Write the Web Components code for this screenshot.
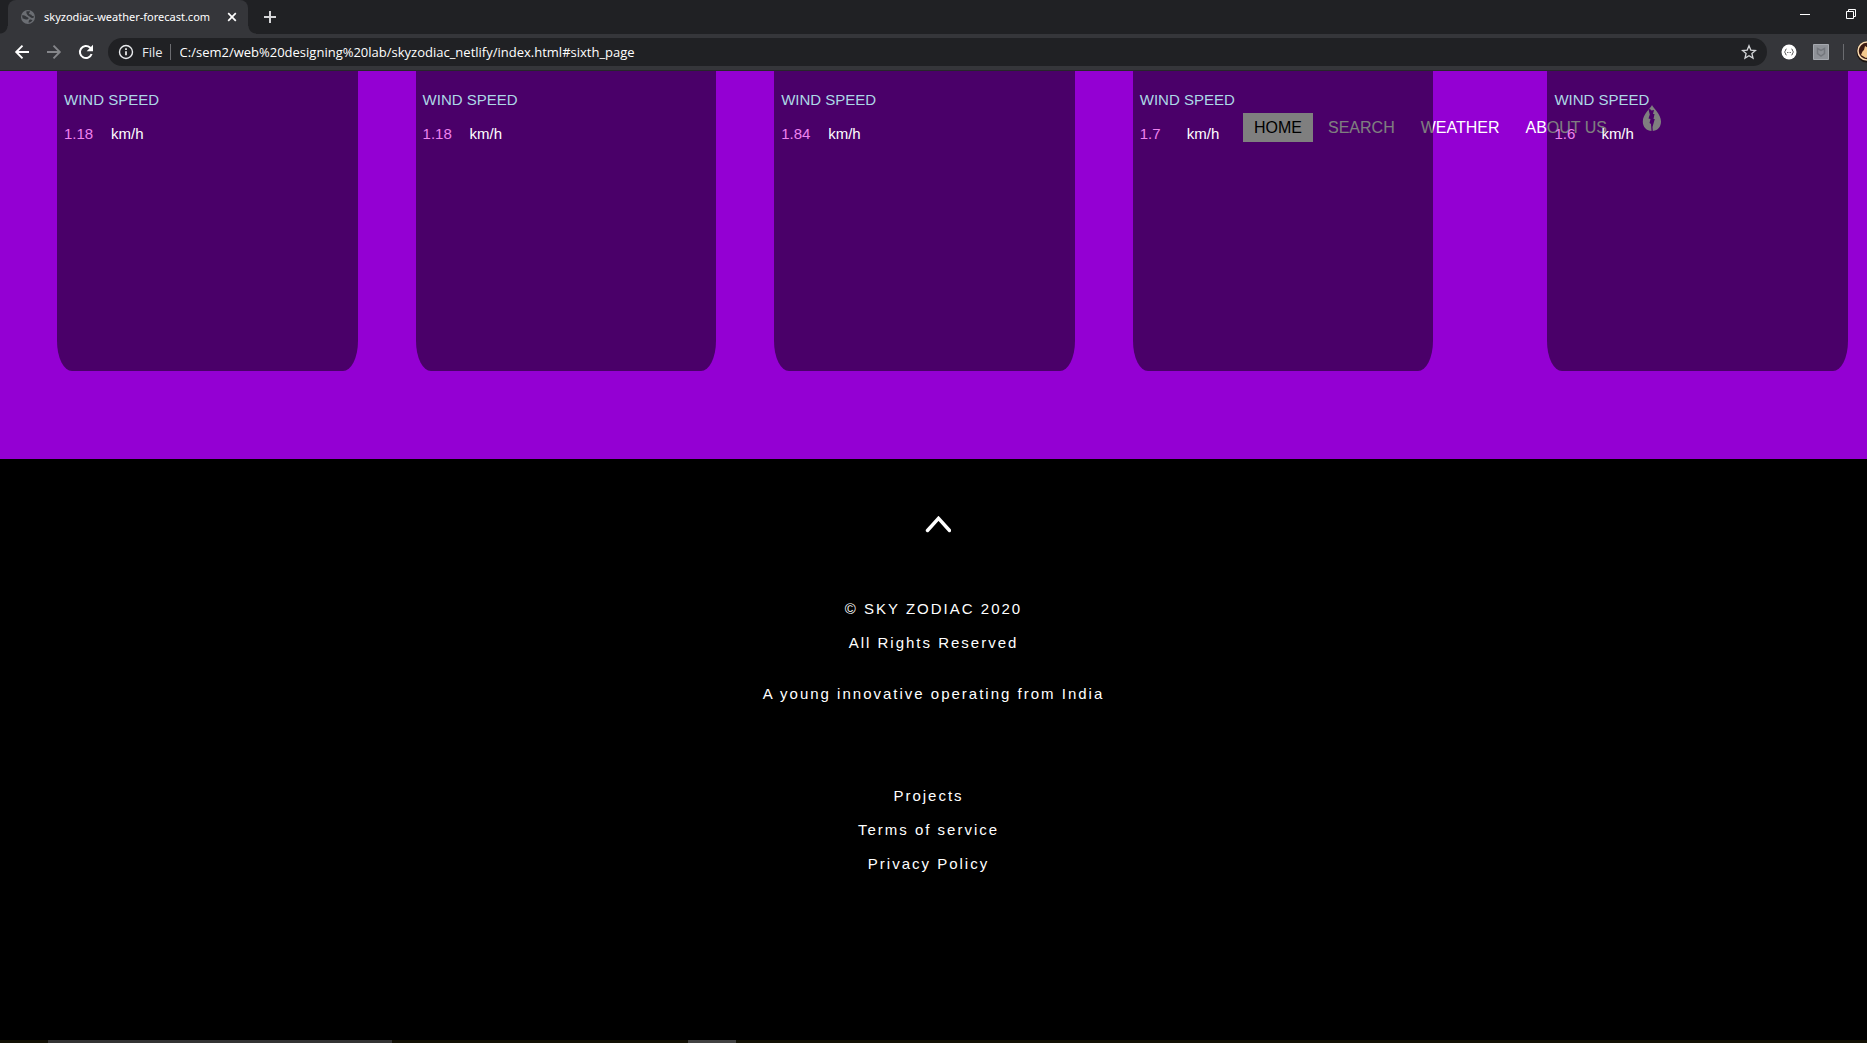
<!DOCTYPE html>
<html lang="en">
<head>
<meta charset="utf-8">
<title>skyzodiac-weather-forecast.com</title>
<style>
body{margin:0;min-height:100vh;display:flex;flex-direction:column;background:#000;font-family:"Liberation Sans",Arial,sans-serif;overflow:hidden}
</style>
</head>
<body>
<browser-bar></browser-bar>
<weather-page>
  <site-nav slot="nav"></site-nav>
  <wind-card speed="1.18"></wind-card>
  <wind-card speed="1.18"></wind-card>
  <wind-card speed="1.84"></wind-card>
  <wind-card speed="1.7"></wind-card>
  <wind-card speed="1.6" class="last"></wind-card>
</weather-page>
<site-footer></site-footer>
<task-strip></task-strip>
<script>
const define = (name, html) => customElements.define(name, class extends HTMLElement {
  constructor() {
    super();
    this.attachShadow({ mode: "open" }).innerHTML = html;
  }
  connectedCallback() {
    const value = this.shadowRoot.querySelector(".value");
    if (value) value.textContent = this.getAttribute("speed");
  }
});

define("browser-bar", `
<style>
:host{display:block;font-family:"Open Sans","Noto Sans",sans-serif;color:#fff}
*{box-sizing:border-box}
svg{display:block;flex:none}
button{display:flex;align-items:center;justify-content:center;border:0;padding:0;background:none;color:inherit}
.tabs{height:34px;background:#202124;display:flex;align-items:stretch;overflow:hidden}
.curve{width:8px;align-self:flex-end;height:8px;background:radial-gradient(circle at 0 0,#202124 7px,#35363a 8px)}
.curve.right{background:radial-gradient(circle at 100% 0,#202124 7px,#35363a 8px)}
.tab{width:240px;background:#35363a;border-radius:8px 8px 0 0;display:flex;align-items:center;padding:0 10px 0 13px}
.title{flex:1;margin-left:9px;font-family:"Noto Sans",sans-serif;font-size:11px;line-height:16px;white-space:nowrap}
.tab button{width:12px;height:12px}
.plus{width:28px}
.win{margin-left:auto;margin-right:-7px;display:flex}
.win button{width:46px}
.tools{height:37px;background:#35363a;border-bottom:1px solid #26272a;display:flex;align-items:center;padding-left:6px}
.tools>button{width:32px;height:32px}
.omni{flex:1;height:28px;margin:0 12px 0 6px;background:#202124;border-radius:14px;display:flex;align-items:center;padding:0 10px;font-size:13px;line-height:18px}
.file{margin-left:8px;color:#e8eaed}
.bar{width:1px;height:16px;background:#6b6c70;margin:0 9px 0 7px}
input{flex:1;min-width:0;border:0;padding:0;background:none;color:#fff;font:inherit;outline:0}
.ext{display:flex;align-items:center;width:88px;overflow:hidden}
.ext svg+svg{margin-left:15px}
.ext .bar{margin:0 12px 0 14px;flex:none}
</style>
<div class="tabs">
  <span class="curve"></span>
  <div class="tab">
    <svg width="14" height="14" viewBox="0 0 14 14"><circle cx="7" cy="7" r="7" fill="#6b6e73"/><path d="M1 5.500C2 5 3.500 5 4.500 6s2 1 2.800 1.800S7 9.500 6 9.500 3 9 1.600 8.500zM5.500 1.300 9 1.200c.3 1.300-1.500 1.500-1 2.600s2.500.5 2.800 1.700 2.200 0 2.300 1.500c-1 1.500-3 1-3.600.2S7.500 6 6.500 5 5.200 2.500 5.500 1.300zM9 9.500c1 0 2 .2 2.500.8C10.500 12 9 12.700 7.600 12.800 7.500 11.500 8 9.500 9 9.500z" fill="#34363a"/></svg>
    <span class="title">skyzodiac-weather-forecast.com</span>
    <button aria-label="Close tab"><svg width="10" height="10" viewBox="0 0 10 10"><path d="m1.200 1.200 7.600 7.600m0-7.600L1.200 8.800" stroke="#fff" stroke-width="1.700"/></svg></button>
  </div>
  <span class="curve right"></span>
  <button class="plus" aria-label="New tab"><svg width="12" height="12" viewBox="0 0 12 12"><path d="M6 0v12M0 6h12" stroke="#d5d6d8" stroke-width="2"/></svg></button>
  <div class="win">
    <button aria-label="Minimize"><svg width="10" height="28" viewBox="0 0 10 28"><path d="M0 11.500h10" stroke="#fff"/></svg></button>
    <button aria-label="Restore"><svg width="10" height="30" viewBox="0 0 10 30"><path d="M.5 9.500h7v7h-7zM2.500 9V7.500h7v7H8" fill="none" stroke="#fff"/></svg></button>
  </div>
</div>
<div class="tools">
  <button aria-label="Back"><svg width="16" height="16" viewBox="0 0 16 16"><path d="M15 8H2m6.500-6.300L2.200 8l6.300 6.300" fill="none" stroke="#fff" stroke-width="1.900"/></svg></button>
  <button aria-label="Forward"><svg width="16" height="16" viewBox="0 0 16 16"><path d="M1 8h13M7.500 1.700 13.800 8l-6.300 6.300" fill="none" stroke="#85868a" stroke-width="1.900"/></svg></button>
  <button aria-label="Reload"><svg width="16" height="16" viewBox="0 0 16 16"><path d="M13.600 10A6 6 0 1 1 12 3.600L14 5.600" fill="none" stroke="#fff" stroke-width="2"/><path d="M15 .8v6.400H8.700z" fill="#fff"/></svg></button>
  <div class="omni">
    <svg width="16" height="16" viewBox="0 0 16 16"><circle cx="8" cy="8" r="6.500" fill="none" stroke="#e8eaed" stroke-width="1.400"/><path d="M8 7.200v4M8 4.300v1.600" stroke="#fff" stroke-width="1.600"/></svg>
    <span class="file">File</span><span class="bar"></span>
    <input aria-label="Address" value="C:/sem2/web%20designing%20lab/skyzodiac_netlify/index.html#sixth_page">
    <svg width="16" height="16" viewBox="0 0 16 16"><path d="m8 1.800 1.800 4.300 4.700.4-3.600 3 1.100 4.600L8 11.700l-4 2.400 1.100-4.600-3.600-3 4.700-.4z" fill="none" stroke="#d3d5d8" stroke-width="1.300"/></svg>
  </div>
  <div class="ext">
    <svg width="19" height="16" viewBox="0 0 19 16"><circle cx="10" cy="8" r="7.500" fill="#fff"/><path d="M7.500 5C6 5 7 7.500 5.500 8 7 8.500 6 11 7.500 11M12.500 5c1.500 0 .5 2.500 2 3-1.500.5-.5 3-2 3" fill="none" stroke="#444"/><path d="M8 8.500h4" stroke="#777" stroke-dasharray="1 .5"/></svg>
    <svg width="16" height="16" viewBox="0 0 16 16"><path d="M.5.5h15v15H.5z" fill="#8e9197" stroke="#a5a8ae"/><path d="M4.500 4.500 8 6.300l3.500-1.800v5L8 12l-3.500-2.500z" fill="none" stroke="#74777d" stroke-width="1.500"/></svg>
    <span class="bar"></span>
    <svg style="margin:0" width="22" height="22" viewBox="0 0 22 22"><circle cx="11" cy="11" r="10.500" fill="#1a1210"/><circle cx="11" cy="10" r="9" fill="#3b1a12" stroke="#f6d9ae" stroke-width="1.500"/><path d="M5 14c1-2 1-4 3-5l1-4 3 2 2 8-4 2z" fill="#f4c98e"/></svg>
  </div>
</div>`);

define("weather-page", `
<style>
:host{display:block;position:relative;background:#9400d3}
.cards{display:flex;gap:58px;padding:0 19px 88px 57px}
::slotted(wind-card){flex:1}
::slotted(.last){margin-left:56px}
</style>
<slot name="nav"></slot>
<div class="cards"><slot></slot></div>`);

define("wind-card", `
<style>
:host{display:block;position:relative;z-index:2;box-sizing:border-box;height:300px;padding:12px 7px;background:rgba(0,0,0,.5);border-radius:0 0 15px 15px/0 0 30px 30px;color:#fff;font-size:15px;line-height:34px}
h3{margin:0;font:inherit;color:#add8e6}
p{margin:0;display:flex}
.value{width:47px;color:#ee82ee}
</style>
<h3>WIND SPEED</h3>
<p><span class="value"></span><span>km/h</span></p>`);

define("site-nav", `
<style>
:host{position:absolute;z-index:1;top:34px;right:205px}
nav{display:flex;align-items:flex-start;gap:4px;padding-top:8px}
a{padding:0 11px;font-size:16px;line-height:29px;color:#fff;text-decoration:none;white-space:nowrap}
.on{background:#fff;color:#000}
.logo{display:flex;line-height:0;padding:0 0 0 20px;margin-top:-8px}
</style>
<nav>
  <a class="on" href="#home">HOME</a><a href="#search">SEARCH</a><a href="#weather">WEATHER</a><a href="#about">ABOUT US</a>
  <a class="logo" href="#home" aria-label="Sky Zodiac"><svg width="20" height="26" viewBox="0 0 20 26"><path d="M10 0c1 3 9 9 9 16.500C19 22 15.500 26 10 26S.800 22 .800 16.500C.800 9 9 3 10 0z" fill="#fff"/><path d="M6.500 4.500 8 4l1.500 1.500L12 5l-1 4h1.500l-1 5h1.300L10.500 22l.3 4H9.500L9 19l-1.500-1 1-4-2-.5 1.300-4z" fill="#9400d3"/></svg></a>
</nav>`);

define("site-footer", `
<style>
:host{display:flex;flex:1;flex-direction:column;align-items:center;padding-top:57px;background:#000;color:#fff;font-size:15px;line-height:34px;letter-spacing:2px;text-align:center}
button{border:0;padding:0;background:none;margin-bottom:59px;line-height:0}
svg{display:block}
p{margin:0}
.about{margin-top:17px}
.links{display:flex;flex-direction:column;align-items:center;margin-top:68px;padding-right:10px}
a{color:inherit;text-decoration:none}
</style>
<button aria-label="Back to top"><svg width="35" height="17" viewBox="0 0 35 17"><path d="M11.500 14.500 22.500 2.300 33.500 14.500" fill="none" stroke="#fff" stroke-width="3.400" stroke-linecap="round"/></svg></button>
<p>© SKY ZODIAC 2020</p>
<p>All Rights Reserved</p>
<p class="about">A young innovative operating from India</p>
<div class="links"><a href="#projects">Projects</a><a href="#terms">Terms of service</a><a href="#privacy">Privacy Policy</a></div>`);

define("task-strip", `
<style>
:host{display:flex;height:3px;background:#121004;padding-left:48px}
span{background:#343434;width:344px}
span+span{width:48px;margin-left:296px;background:#424242}
</style>
<span></span><span></span>`);
</script>
</body>
</html>
